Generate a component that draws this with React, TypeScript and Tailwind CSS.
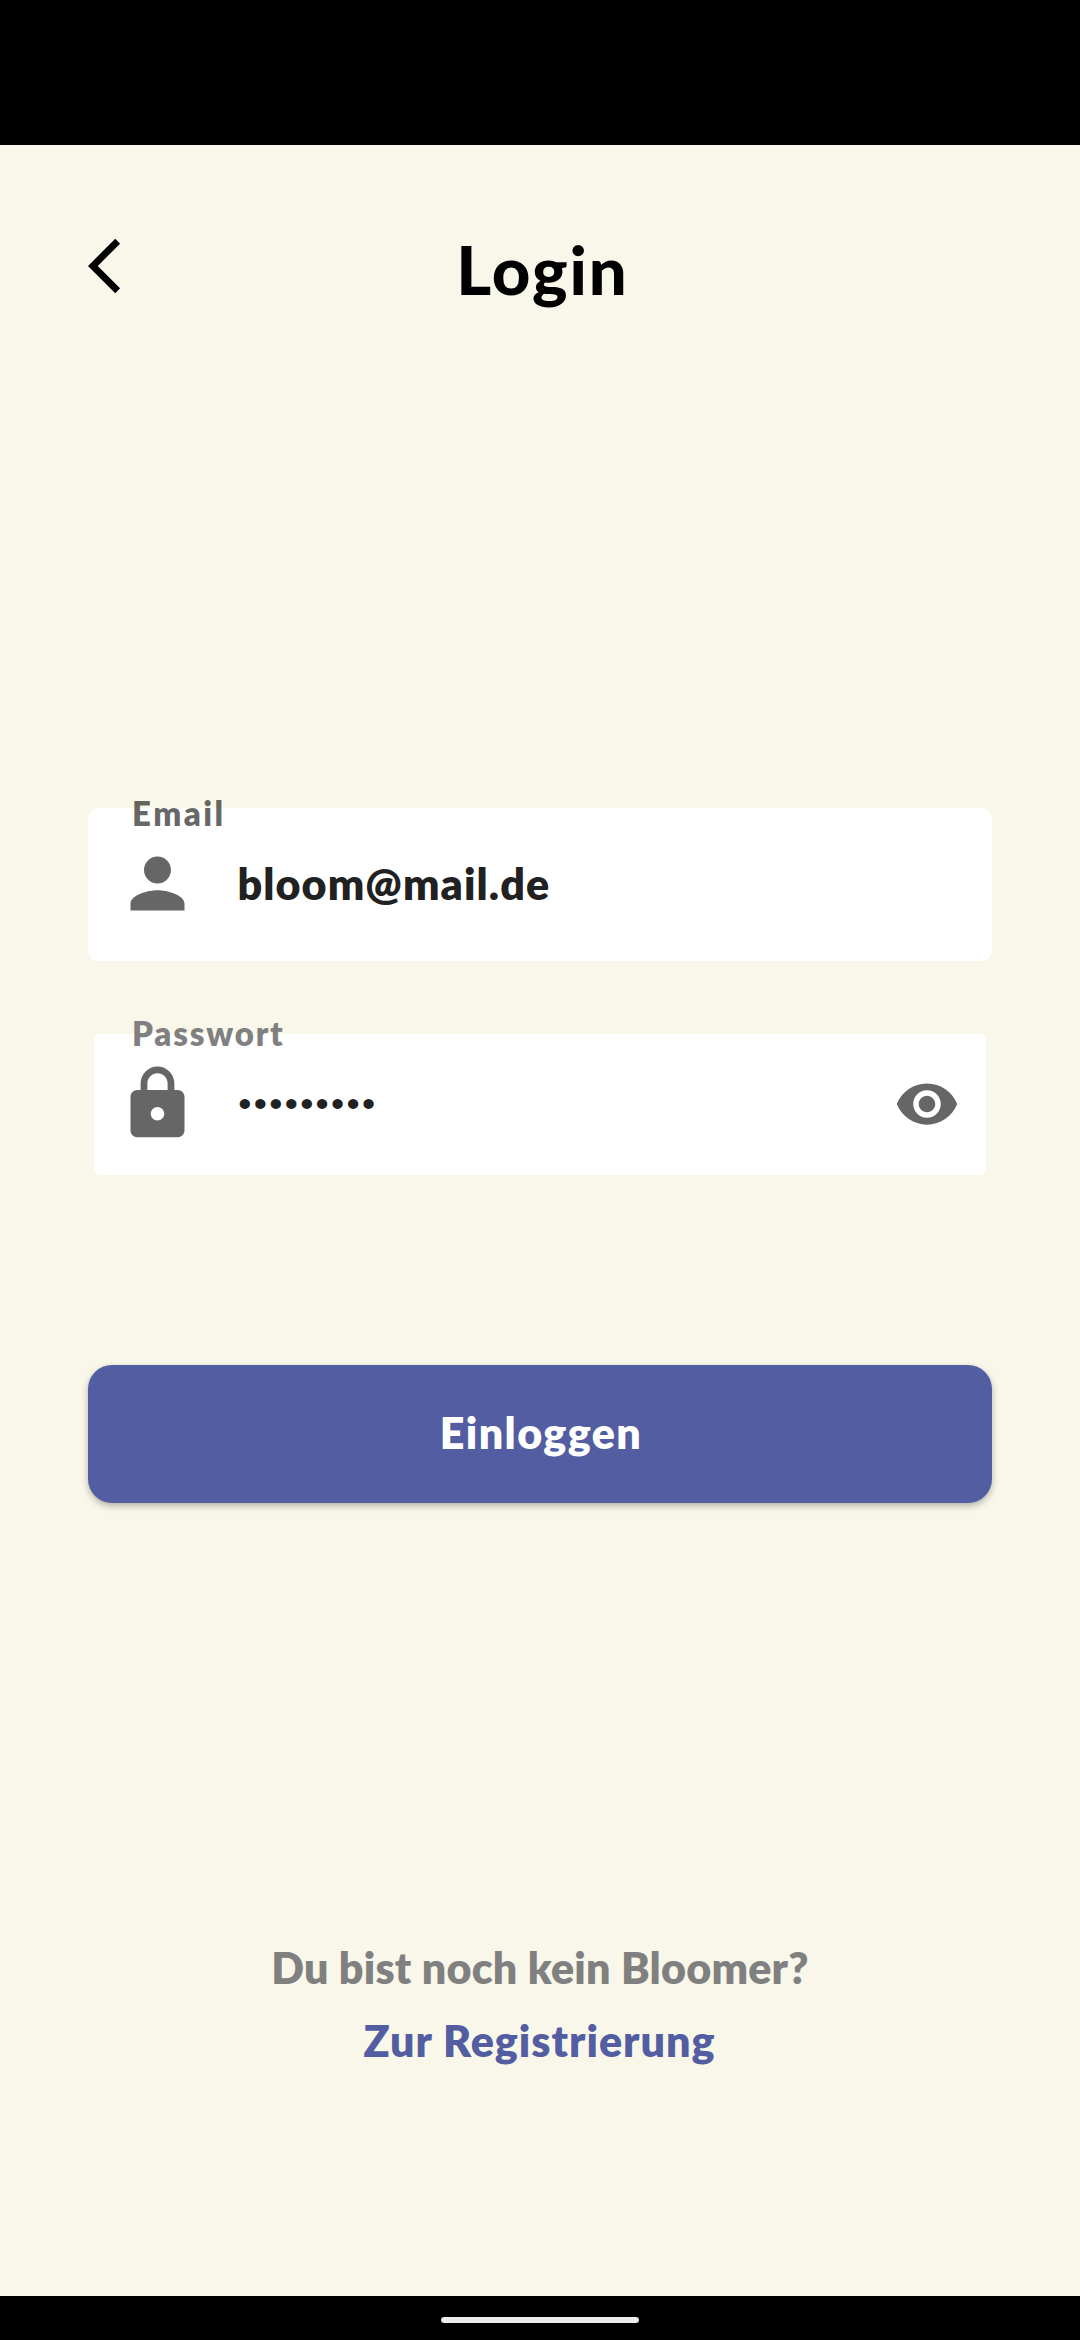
import type { ReactNode } from 'react';

type IconProps = { path: string; className: string };

function Icon({ path, className }: IconProps) {
  return (
    <svg viewBox="0 0 24 24" fill="currentColor" aria-hidden="true" className={className}>
      <path d={path} />
    </svg>
  );
}

const icons = {
  back: 'M11.67 3.87L9.9 2.1 0 12l9.9 9.9 1.77-1.77L3.54 12z',
  person:
    'M12 12c2.21 0 4-1.79 4-4s-1.79-4-4-4-4 1.79-4 4 1.79 4 4 4zm0 2c-2.67 0-8 1.34-8 4v2h16v-2c0-2.66-5.33-4-8-4z',
  lock: 'M18 8h-1V6c0-2.76-2.24-5-5-5S7 3.24 7 6v2H6c-1.1 0-2 .9-2 2v10c0 1.1.9 2 2 2h12c1.1 0 2-.9 2-2V10c0-1.1-.9-2-2-2zm-6 9c-1.1 0-2-.9-2-2s.9-2 2-2 2 .9 2 2-.9 2-2 2zM15 8H9V6c0-1.66 1.34-3 3-3s3 1.34 3 3v2z',
  eye: 'M12 4.5C7 4.5 2.73 7.61 1 12c1.73 4.39 6 7.5 11 7.5s9.27-3.11 11-7.5c-1.73-4.39-6-7.5-11-7.5zM12 17c-2.76 0-5-2.24-5-5s2.24-5 5-5 5 2.24 5 5-2.24 5-5 5zm0-8c-1.66 0-3 1.34-3 3s1.34 3 3 3 3-1.34 3-3-1.34-3-3-3z',
};

function Field({ className, children }: { className: string; children: ReactNode }) {
  return <div className={`relative flex items-center bg-white ${className}`}>{children}</div>;
}

export default function App() {
  return (
    <div className="flex h-[2340px] w-[1080px] flex-col bg-[#f9f7e9] font-['Lato',sans-serif]">
      <div className="h-[145px] bg-black" />

      <main className="flex flex-1 flex-col px-[88px]">
        <header className="grid grid-cols-[66px_1fr_66px] items-start pt-[85px]">
          <button aria-label="Zurück" className="mt-[3px] text-black">
            <Icon path={icons.back} className="size-[66px]" />
          </button>
          <h1 className="pl-[5px] text-center text-[67px] leading-[78px] font-black tracking-[1.9px] text-black">
            Login
          </h1>
        </header>

        <form className="mt-[500px] flex flex-col">
          <Field className="h-[153px] rounded-[10px] pl-[28.5px]">
            <label className="absolute -top-[15px] left-[44px] text-[33px] leading-[40px] font-extrabold tracking-[2.5px] text-black/60">
              Email
            </label>
            <Icon path={icons.person} className="-mt-[2px] size-[81px] text-[#666666]" />
            <span className="-mt-[1px] ml-[40px] text-[43px] leading-[52px] font-extrabold tracking-[1.08px] text-[#212121]">
              bloom@mail.de
            </span>
          </Field>

          <Field className="mx-[6px] mt-[73px] h-[141px] rounded-[5px] pr-[26.5px] pl-[22.5px]">
            <label className="absolute -top-[21px] left-[38px] text-[33px] leading-[40px] font-extrabold tracking-[1.8px] text-[#808080]">
              Passwort
            </label>
            <Icon path={icons.lock} className="-mt-[2px] size-[81px] text-[#666666]" />
            <span className="-mt-[6px] ml-[40.5px] flex-1 text-[23.5px] leading-[52px] font-bold tracking-[1.84px] text-[#212121]">
              •••••••••
            </span>
            <Icon path={icons.eye} className="-mt-[2px] size-[66px] text-[#666666]" />
          </Field>

          <button
            type="button"
            className="mt-[190px] h-[138px] rounded-[24px] bg-[#535da1] pb-[2px] pl-[2px] text-center text-[43px] leading-[52px] font-extrabold tracking-[1.39px] text-white shadow-[0_3px_7px_rgba(0,0,0,0.28)]"
          >
            Einloggen
          </button>
        </form>

        <footer className="mt-[439px] flex flex-col items-center gap-[21px] text-[43px] leading-[52px] font-extrabold">
          <p className="tracking-[0.22px] text-[#808080]">Du bist noch kein Bloomer?</p>
          <a className="pr-[1px] tracking-[1px] text-[#535da1]">Zur Registrierung</a>
        </footer>
      </main>

      <div className="flex h-[44px] justify-center bg-black pt-[21px]">
        <div className="h-[6px] w-[198px] rounded-full bg-[#ececec]" />
      </div>
    </div>
  );
}
